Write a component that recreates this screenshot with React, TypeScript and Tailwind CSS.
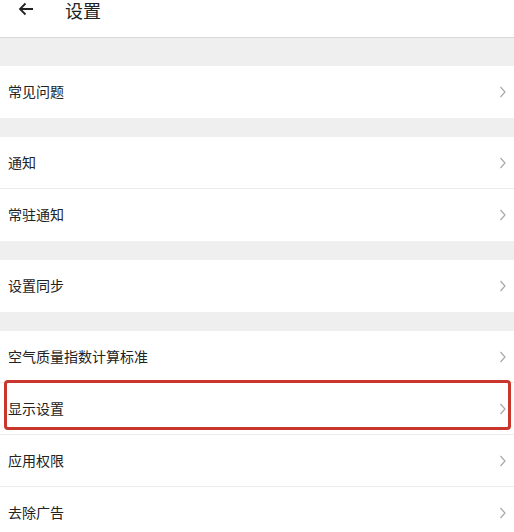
import React from "react";

const font = { fontFamily: '"Noto Sans CJK SC", "Noto Sans", sans-serif' };

function Chevron() {
  return (
    <svg width="8" height="12" viewBox="0 0 8 12" className="shrink-0">
      <path d="M1.5 1 L6 6 L1.5 11" fill="none" stroke="#a8a8a8" strokeWidth="1.2" />
    </svg>
  );
}

function Row({ label, border, highlight }: { label: string; border?: boolean; highlight?: boolean }) {
  return (
    <div className={`relative flex h-[52px] items-center justify-between bg-white pl-[8px] pr-[7px] ${border ? "border-b border-[#ebebeb]" : ""}`}>
      <span className="mt-[-1px] text-[14px] text-[#222]">{label}</span>
      <Chevron />
      {highlight && (
        <div className="pointer-events-none absolute left-[4px] right-[3px] top-[-3px] h-[50px] rounded-[4px] border-[3px] border-[#c9372c]" />
      )}
    </div>
  );
}

export default function App() {
  return (
    <div className="h-[532px] w-[514px] overflow-hidden bg-[#efefef]" style={font}>
      <div className="flex h-[38px] items-start border-b border-[#d8d8d8] bg-white">
        <svg width="16" height="14" viewBox="0 0 16 14" className="ml-[18px] mt-[2px]">
          <path d="M15 7 H2 M7.5 1.5 L2 7 L7.5 12.5" fill="none" stroke="#222" strokeWidth="1.8" />
        </svg>
        <span className="ml-[31px] mt-0 text-[18px] leading-[20px] text-[#222]">设置</span>
      </div>
      <div className="h-[28px]" />
      <Row label="常见问题" />
      <div className="h-[19px]" />
      <Row label="通知" border />
      <Row label="常驻通知" />
      <div className="h-[19px]" />
      <Row label="设置同步" />
      <div className="h-[19px]" />
      <Row label="空气质量指数计算标准" border />
      <Row label="显示设置" border highlight />
      <Row label="应用权限" border />
      <Row label="去除广告" />
    </div>
  );
}
